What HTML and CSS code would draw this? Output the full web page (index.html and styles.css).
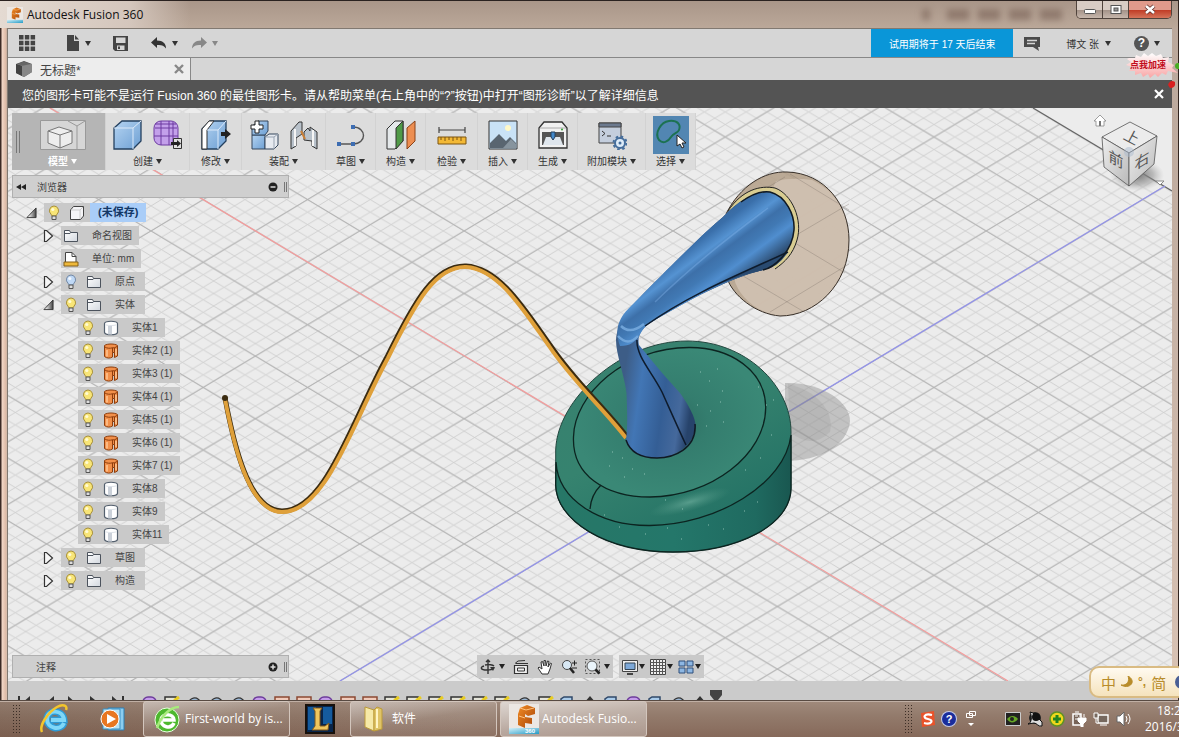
FILE: index.html
```html
<!DOCTYPE html>
<html lang="zh-CN">
<head>
<meta charset="utf-8">
<title>Autodesk Fusion 360</title>
<link rel="stylesheet" href="styles.css">
</head>
<body>
<svg class="defs" aria-hidden="true">
  <defs>
    <linearGradient id="gBlue" x1="0" y1="0" x2="1" y2="1"><stop offset="0" stop-color="#b5d4f2"/><stop offset="1" stop-color="#6d9fd3"/></linearGradient>
    <linearGradient id="gWhite" x1="0" y1="0" x2="1" y2="1"><stop offset="0" stop-color="#fff"/><stop offset="1" stop-color="#d3d8df"/></linearGradient>
    <linearGradient id="gDark" x1="0" y1="0" x2="1" y2="0"><stop offset="0.2" stop-color="#eee"/><stop offset="1" stop-color="#444"/></linearGradient>
    <linearGradient id="gFusion" x1="0" y1="0" x2="1" y2="1"><stop offset="0" stop-color="#f08a24"/><stop offset="1" stop-color="#a94608"/></linearGradient>
    <linearGradient id="gCyan" x1="0" y1="0" x2="1" y2="1"><stop offset="0" stop-color="#d5f0f8"/><stop offset="1" stop-color="#239bc6"/></linearGradient>
  </defs>
  <symbol id="bulb" viewBox="0 0 12 16"><path d="M6 1a4.700 4.700 0 0 0-3 8.200L4 11h4l1-1.800A4.700 4.700 0 0 0 6 1z" fill="#f8e577" stroke="#a8903a"/><circle cx="4.800" cy="4.500" r="1.600" fill="#fffbd5"/><path d="M4 11h4v3.500H4z" fill="#ddd" stroke="#555"/></symbol>
  <symbol id="bulboff" viewBox="0 0 12 16"><path d="M6 1a4.700 4.700 0 0 0-3 8.200L4 11h4l1-1.800A4.700 4.700 0 0 0 6 1z" fill="#bfd8f5" stroke="#7288a5"/><circle cx="4.800" cy="4.500" r="1.600" fill="#f2f8ff"/><path d="M4 11h4v3.500H4z" fill="#ddd" stroke="#555"/></symbol>
  <symbol id="folder" viewBox="0 0 16 16"><path d="M1.500 13.500v-11h5l1 2h7v9z" fill="url(#gWhite)" stroke="#4c535d"/><path d="M2 5.500h5l1-1" stroke="#4c535d" fill="none"/></symbol>
  <symbol id="body" viewBox="0 0 16 16"><path d="M1.500 3.500C2 .500 14 .500 14.500 3.500v9c-1 3-12 3-13 0z" fill="#fff" stroke="#54606e" stroke-width="1.200"/><path d="M5 6v8.500h4V6z" fill="#cbd1d9"/><path d="M2.500 4.800c3 1 8 1 11 0" stroke="#dde2e8" fill="none"/></symbol>
  <symbol id="surf" viewBox="0 0 16 16"><path d="M1.500 2.500C4 .500 12 .500 14.500 2.500V13l-3 1.500V9.500H9.500V14C7 15.500 4 15.500 1.500 13.500z" fill="#f2904a" stroke="#8d3d0c"/><path d="M2 4c2 1.500 5 1.500 7.500.8V9.500M9.500 4.800h2V9.500M11.500 4.800L14 3.500" stroke="#8d3d0c" fill="none"/><path d="M4 7v6.500M13 6v6" stroke="#ffc694" stroke-width="1.500"/></symbol>
  <symbol id="closed" viewBox="0 0 11 14"><path d="M1.500 1.500h2l6 5.500-6 5.500h-2z" fill="#f6f6f6" stroke="#333" stroke-width="1.200"/></symbol>
  <symbol id="open" viewBox="0 0 12 14"><path d="M11 1.500V12H1z" fill="url(#gDark)" stroke="#333"/></symbol>
  <symbol id="cube" viewBox="0 0 16 16"><path d="M1.500 5l3-3.500h10v9.500l-3 3.500h-10z" fill="#f5f5f7" stroke="#444"/><path d="M2 5h9l3-3M11 5v9" stroke="#ccc" fill="none"/></symbol>
  <symbol id="sketch" viewBox="0 0 16 16"><path d="M1 1h11v14H1z" fill="#e5e5da" stroke="#333" stroke-width="1.500"/><path d="M15 1l-4 3-2 6" stroke="#e8cc22" stroke-width="3" fill="none"/></symbol>
  <symbol id="purple" viewBox="0 0 16 16"><rect x="1" y="1" width="13" height="13" rx="5" fill="#c49cea" stroke="#6d3c9b" stroke-width="1.500"/></symbol>
  <symbol id="orangebox" viewBox="0 0 16 16"><path d="M1 1h14v14H1z" fill="#f1cbbb" stroke="#8c4933" stroke-width="1.500"/></symbol>
  <symbol id="bluebox" viewBox="0 0 16 16"><path d="M1 15V3l3-2h8v13z" fill="#a9cbea" stroke="#30496a" stroke-width="1.500"/></symbol>
  <symbol id="arc" viewBox="0 0 16 16"><path d="M1 14C0 0 14-2 15 9l-5 3V5L5 9v6z" fill="#9bb8d6" stroke="#333" stroke-width="1.200"/></symbol>
  <symbol id="peak" viewBox="0 0 16 16"><path d="M8 0l6 7h-3v8H5V7H2z" fill="#333"/></symbol>
  <symbol id="fusion" viewBox="0 0 30 30"><path d="M0 0h30v30H0z" fill="#ece7e3"/><path d="M11 4L18 1l8 3v6l-7 2-3-2v3l7 1v6l-7-1v5l-7-3V10z" fill="url(#gFusion)"/><path d="M11 4l6 2 8-2M10 12l6 2" stroke="#ffc27e" fill="none"/><path d="M0 24h30v6H0z" fill="url(#gCyan)"/></symbol>
</svg>

<div class="desktop">
  <main class="window">
    <header class="titlebar">
      <svg class="app-icon"><use href="#fusion"/></svg>
      <h1 class="title">Autodesk Fusion 360</h1>
      <div class="ghost"><i></i><i></i><i></i><i></i><i></i></div>
      <div class="winctl">
        <button class="wc" aria-label="最小化"><svg width="14" height="10"><rect x="1.500" y="4.500" width="11" height="4" rx="1" fill="#fff" stroke="#555"/></svg></button>
        <button class="wc" aria-label="最大化"><svg width="14" height="12"><rect x="2" y="1.500" width="10" height="8" fill="#fff" stroke="#555"/><rect x="5" y="4" width="4" height="3" fill="#999" stroke="#555"/></svg></button>
        <button class="wc wc-close" aria-label="关闭"><svg width="14" height="12"><path d="M3 2l8 7M11 2L3 9" stroke="#5b2b25" stroke-width="4"/><path d="M3 2l8 7M11 2L3 9" stroke="#fff" stroke-width="2.500"/></svg></button>
      </div>
    </header>

    <div class="frame">
      <div class="appbar">
        <button class="ab ab-grid" aria-label="数据面板"><svg width="18" height="18" fill="#444"><path d="M1 1h4.500v4.500H1zM6.800 1h4.500v4.500H6.800zM12.600 1h4.500v4.500h-4.500zM1 6.800h4.500v4.500H1zM6.800 6.800h4.500v4.500H6.800zM12.600 6.800h4.500v4.500h-4.500zM1 12.600h4.500v4.500H1zM6.800 12.600h4.500v4.500H6.800zM12.600 12.600h4.500v4.500h-4.500z"/></svg></button>
        <button class="ab ab-file" aria-label="文件"><svg width="14" height="18"><path d="M1 1h7v6h5v10H1z" fill="#444"/><path d="M9 1l4 4.500H9z" fill="#444"/></svg><b class="car"></b></button>
        <button class="ab ab-save" aria-label="保存"><svg width="16" height="17"><path d="M0 1h15v15H2l-2-2z" fill="#444"/><path d="M3 2.500h9.500v5.500H3zM4 10.500h7.500V15H4z" fill="#d6d6d6"/><path d="M5 11.500h2V14H5z" fill="#444"/></svg></button>
        <button class="ab ab-undo" aria-label="撤销"><svg width="16" height="14"><path d="M6 1v3.500c6 0 9 3 9 8-2-3-5-4-9-3.500V12L0 6.500z" fill="#333"/></svg><b class="car"></b></button>
        <button class="ab dim" aria-label="重做"><svg width="16" height="14"><path d="M10 1v3.500c-6 0-9 3-9 8 2-3 5-4 9-3.500V12l6-5.500z" fill="#888"/></svg><b class="car"></b></button>
        <a class="trial" href="#">试用期将于 17 天后结束</a>
        <button class="ab chat" aria-label="消息"><svg width="16" height="15"><path d="M0 1h16v10h-2l1 4-6-4H0z" fill="#4b4b4b"/><path d="M3 4.500h10M3 7.500h8" stroke="#d6d6d6" stroke-width="1.300"/></svg></button>
        <button class="ab user">博文 张<b class="car"></b></button>
        <button class="ab help" aria-label="帮助"><span class="q">?</span><b class="car"></b></button>
      </div>

      <div class="tabs">
        <div class="tab">
          <svg width="16" height="16"><path d="M0 3l8-3 8 3v8l-8 5-8-4z" fill="#555"/><path d="M0 3l6 2v10l2 1 8-5V3z" fill="#888"/><path d="M0 3l6 2v10l-6-3z" fill="#444"/><path d="M1 3l7-2.500L15 3 6.500 4.800z" fill="#666"/></svg>
          <span class="tab-name">无标题*</span>
          <button class="tab-x" aria-label="关闭标签"><svg width="10" height="10"><path d="M1 1l8 8M9 1L1 9" stroke="#888" stroke-width="2.400"/></svg></button>
        </div>
      </div>

      <div class="notice">
        <span>您的图形卡可能不是运行 Fusion 360 的最佳图形卡。请从帮助菜单(右上角中的“?”按钮)中打开“图形诊断”以了解详细信息</span>
        <button aria-label="关闭提示"><svg width="10" height="10"><path d="M1 1l8 8M9 1L1 9" stroke="#fff" stroke-width="2.200"/></svg></button>
      </div>

      <section class="viewport">
        <svg class="scene" viewBox="8 108 1164 573" preserveAspectRatio="xMidYMid slice" aria-hidden="true">
          <defs>
            <pattern id="minor" patternUnits="userSpaceOnUse" x="673" y="481.300" width="20.880" height="12.520"><path d="M0 0L20.880 12.520M0 12.520L20.880 0" stroke="#cdcdcd" stroke-width=".9"/></pattern>
            <pattern id="major" patternUnits="userSpaceOnUse" x="673" y="481.300" width="104.400" height="62.600"><path d="M0 0L104.400 62.600M0 62.600L104.400 0" stroke="#b0b0b0" stroke-width="1"/></pattern>
            <linearGradient id="teal" x1="0" y1="0" x2=".6" y2="1"><stop offset="0" stop-color="#38806f"/><stop offset=".5" stop-color="#36836f"/><stop offset="1" stop-color="#227064"/></linearGradient>
            <linearGradient id="side" x1="0" y1="0" x2="1" y2="0"><stop offset="0" stop-color="#277767"/><stop offset=".5" stop-color="#24776a"/><stop offset=".85" stop-color="#1f6a60"/><stop offset="1" stop-color="#195750"/></linearGradient>
            <radialGradient id="topf"><stop offset="0" stop-color="#2c6c60"/><stop offset=".4" stop-color="#347d6e"/><stop offset="1" stop-color="#3a8876"/></radialGradient>
            <radialGradient id="glow"><stop offset="0" stop-color="#7dbba9" stop-opacity=".55"/><stop offset="1" stop-color="#5b9f8c" stop-opacity="0"/></radialGradient>
            <linearGradient id="horn" gradientUnits="userSpaceOnUse" x1="690" y1="225" x2="738" y2="290"><stop offset="0" stop-color="#355f91"/><stop offset=".22" stop-color="#3a6faa"/><stop offset=".38" stop-color="#5593d2"/><stop offset=".5" stop-color="#3d70a9"/><stop offset=".62" stop-color="#4179b4"/><stop offset=".74" stop-color="#508ecf"/><stop offset="1" stop-color="#26405f"/></linearGradient>
            <linearGradient id="neck" gradientUnits="userSpaceOnUse" x1="622" y1="390" x2="692" y2="400"><stop offset="0" stop-color="#3d5d87"/><stop offset=".25" stop-color="#4276b5"/><stop offset=".6" stop-color="#345e95"/><stop offset=".85" stop-color="#45699c"/><stop offset="1" stop-color="#27436b"/></linearGradient>
            <linearGradient id="cubeL" x1="0" y1="0" x2="1" y2="1"><stop offset="0" stop-color="#efefef"/><stop offset="1" stop-color="#b9b9b9"/></linearGradient>
            <radialGradient id="soft"><stop offset="0" stop-color="#777"/><stop offset=".6" stop-color="#888" stop-opacity=".5"/><stop offset="1" stop-color="#aaa" stop-opacity="0"/></radialGradient>
          </defs>
          <path d="M8 108H1172V681H8z" fill="#ececec"/>
          <path d="M8 108H1033L1172 191V681H8z" fill="url(#minor)"/>
          <path d="M8 108H1033L1172 191V681H8z" fill="url(#major)"/>
          <path d="M1033 108L1172 191" stroke="#666" stroke-width="1.300"/>
          <path d="M50 108L1008 681" stroke="#f59c9c" stroke-width="1.200"/>
          <path d="M1165 186L340 681" stroke="#9292ea" stroke-width="1.200"/>
          <path d="M785 383C822 382 850 402 850 421C848 445 820 461 785 461z" fill="#888" opacity=".42"/>
          <path d="M788 384C815 390 835 410 830 432Q812 450 790 432z" fill="#777" opacity=".13"/>
          <path d="M726 214C740 186 764 171 787 172C825 173 849 205 849 240C849 285 815 316 780 316C756 314 733 296 727 278z" fill="#b39f87" fill-opacity=".85"/>
          <path d="M776 181Q792 177 812 180C836 191 849 214 849 240C849 285 815 316 780 316C758 313 738 297 734 278z" fill="#d0c1b1" fill-opacity=".9"/>
          <path d="M742 267L849 204M770 312L849 264M790 174L849 210M765 225L845 273M738 273L806 313M765 189L785 177" stroke="#7d746b" stroke-opacity=".35"/>
          <path d="M726 214C740 186 764 171 787 172C825 173 849 205 849 240C849 285 815 316 780 316C756 314 733 296 727 278" fill="none" stroke="#383029"/>
          <path d="M728 211C742 190 760 185 775 188C792 194 803 220 797 240C793 254 785 262 775 269" fill="#d8cc91" stroke="#222"/>
          <path d="M555.700 485V450C557 400 620 341 687 341C745 341 791 385 791 432V488C791 525 738 552 673 552C605 552 556 520 555.700 485z" fill="url(#teal)" stroke="#23473f"/>
          <path d="M556 462C558 500 600 526 650 525.500C715 525 785 485 791 435V488C791 525 738 552 673 552C605 552 556 520 555.700 485z" fill="url(#side)" stroke="#0c2420" stroke-width="1.300"/>
          <path d="M573.500 437C572 475 605 497 650 497C710 497 766 455 765.700 407C765 370 730 347.500 690 347.500C625 347 574 395 573.500 437z" fill="url(#topf)" stroke="#0c2420" stroke-width="1.300"/>
          <ellipse cx="690" cy="502" rx="42" ry="9" transform="rotate(-16 690 502)" fill="url(#glow)"/>
          <path d="M601 485Q591 495 590 509" stroke="#0c2420" stroke-width="1.300" fill="none"/>
          <path d="M700 372h1m8 9h1m7-12h1m4 22h1m-26 14h1m12 6h1m9-9h1m-15 24h1m16-4h1M612 452h1m9 6h1m-14 8h1m22 3h1m-9 8h1m19-3h1M604 515h1m14 12h1m25 7h1m21-6h1m13 11h1m26-14h1m14 4h1m20-18h1m12-9h1M665 500h1m16 9h1M745 470h1m14-12h1m10-23h1m-6-30h1m-9-18h1m14 13h1" stroke="#b4dccf" opacity=".7"/>
          <path d="M225 398C233 440 248 511 282 511C325 511 350 425 387 357C415 300 435 265 466 266C500 268 525 310 550 345C575 382 605 408 627 437" fill="none" stroke="#3b2b10" stroke-width="5"/>
          <path d="M225 399C233 441 248 512 282 512C326 512 351 426 388 358C416 301 436 266 466 267C499 269 524 311 549 346C574 383 604 409 626 438" fill="none" stroke="#dfa03a" stroke-width="4"/>
          <circle cx="225" cy="398" r="3" fill="#3b2b10"/>
          <path d="M626 440C628 425 627 408 626.500 393C624 373 616 355 616 340C617 322 632 305 647 290C685 252 705 232 723 217C740 198 758 191 770 192C786 196 795 215 794 230C792 253 773 268 763 270C730 278 690 299 650 323C641 329 637 337 639 345C657 367 668 380 680 393C690 407 698 422 695 430C692 447 673 458 657 458C641 458 627 450 626 440z" fill="url(#neck)"/>
          <path d="M620 346C614 330 618 318 632 305L647 290C685 252 705 232 723 217C740 198 758 191 770 192C786 196 795 215 794 230C792 253 773 268 763 270C730 278 690 299 650 323C638 329 641 346 620 346z" fill="url(#horn)"/>
          <path d="M655 302Q700 258 768 208" stroke="#8abbf0" stroke-width="1.500" opacity=".35" fill="none"/>
          <path d="M621 326Q630 335 644 324M618 336Q628 347 638 336" stroke="#78acdf" stroke-width="2.500" opacity=".85" fill="none"/>
          <path d="M788 252Q778 268 763 270C735 276 710 288 687 300Q740 274 788 252z" fill="#294a70"/>
          <path d="M645 326C690 294 740 274 788 252M637 340C636 356 652 372 662 392C671 412 679 430 686 445" fill="none" stroke="#0e1b2c" stroke-width="1.500"/>
          <path d="M741 202Q758 190 770 192C786 196 795 215 794 230C792 253 773 268 763 270M626 440Q632 458 657 458C673 458 697 449 695 424" fill="none" stroke="#101923" stroke-width="1.500"/>
          <ellipse cx="1137" cy="175" rx="27" ry="16" fill="url(#soft)"/>
          <path d="M1130 122L1157 136L1129 153L1102 137z" fill="#ececec" stroke="#555" stroke-width=".8"/>
          <path d="M1102 137L1129 153V186L1104 167z" fill="url(#cubeL)" stroke="#555" stroke-width=".8"/>
          <path d="M1157 136L1129 153V186L1154 164z" fill="url(#cubeL)" stroke="#555" stroke-width=".8"/>
          <circle cx="1129" cy="152" r="5" fill="#a9b9cd" opacity=".5"/>
          <text class="face" transform="translate(1129 142) rotate(28)" text-anchor="middle">上</text>
          <text class="face" transform="translate(1116 165) skewY(29)" text-anchor="middle">前</text>
          <text class="face" transform="translate(1142 166) skewY(-31)" text-anchor="middle">右</text>
          <path d="M1094 121l6-6 6 6h-2v5h-8v-5z" fill="#fff" stroke="#888" stroke-width=".8"/><path d="M1099 121h2v5h-2z" fill="#777"/>
          <path d="M1156 181h8l-4 4z" fill="#fff" stroke="#888"/>
        </svg>

        <nav class="ribbon">
          <button class="rb model"><span class="ics"><svg width="46" height="30"><path d="M.500 .5h45v29H.500z" fill="#d6d6d6" stroke="#999"/><path d="M28 1l9 5 8-5M37 6v23" stroke="#999" fill="none"/><path d="M8 11l11-4 13 4v12l-12 5-12-5z" fill="#eee" stroke="#777"/><path d="M8 11l12 4 12-4M20 15v13" stroke="#777" fill="none"/></svg></span><span class="lb">模型<b class="car"></b></span></button>
          <button class="rb w84"><span class="ics"><svg width="30" height="30"><path d="M1 8l8-7h19v20l-8 8H1z" fill="url(#gBlue)" stroke="#24405f" stroke-width="1.300"/><path d="M1 8h19v21M20 8l8-7" stroke="#dceafa" fill="none"/></svg><svg width="30" height="30"><rect x="1" y="1" width="24" height="24" rx="7" fill="#c3a0ea" stroke="#6c3ba0"/><path d="M2 8h22M1 16h24M8 1v24M16 1v24M20 2v22M2 4h21" stroke="#6c3ba0" fill="none"/><path d="M20.500 18.500h8v10h-8z" fill="#e0e0e0" stroke="#333"/><path d="M18 22h6v-2l4 3.500-4 3.500v-2h-6z" fill="#222"/></svg></span><span class="lb">创建<b class="car"></b></span></button>
          <button class="rb w52"><span class="ics"><svg width="30" height="30"><path d="M1 9l8-8h16v20l-8 8H1z" fill="url(#gBlue)" stroke="#24405f" stroke-width="1.300"/><path d="M1 9l7-8h5L6 10v19H1z" fill="#fff" stroke="#333"/><path d="M6 10h11v19M17 10l8-9" stroke="#dceafa" fill="none"/><path d="M20 12h4V9l6 5-6 5v-3h-4z" fill="#222"/></svg></span><span class="lb">修改<b class="car"></b></span></button>
          <button class="rb w84"><span class="ics"><svg width="30" height="30"><path d="M2 15h13v14H2z" fill="url(#gBlue)" stroke="#35475c"/><path d="M5 4l3-3h10v10l-3 4H2V6z" fill="url(#gBlue)" stroke="#35475c"/><path d="M15 17l4-3h9v11l-4 4h-9z" fill="#e6eaf0" stroke="#35475c"/><path d="M15 17h9v12M24 17l4-3" stroke="#9aa5b3" fill="none"/><path d="M5 1h4v4h4v4H9v4H5V9H1V5h4z" fill="#fff" stroke="#222"/></svg><svg width="28" height="30"><path d="M1 11l8-9h3v12l-6 4v8l-5 3z" fill="#b9c2cb" stroke="#333"/><path d="M14 12l4-4 2 3V7l7 5v17l-5-3v-5l-8-1z" fill="#b9c2cb" stroke="#333"/><path d="M5 9v17M23 10v16" stroke="#f5f5f5" stroke-width="2"/><path d="M11 11l4 8" stroke="#cb8038" stroke-width="2"/></svg></span><span class="lb">装配<b class="car"></b></span></button>
          <button class="rb w50"><span class="ics"><svg width="30" height="30"><path d="M3 24h14M17 7c14 0 14 17 0 17" stroke="#555" fill="none" stroke-width="1.400"/><path d="M1 22h4v4H1zM15 22h4v4h-4zM15 5h4v4h-4z" fill="#3d6db2"/></svg></span><span class="lb">草图<b class="car"></b></span></button>
          <button class="rb w50"><span class="ics"><svg width="30" height="30"><path d="M1 9l8-8h8v20l-8 8H1z" fill="#e5e9eb" stroke="#333"/><path d="M10 8l7-7v20l-7 8z" fill="#4f9a48" stroke="#333"/><path d="M21 8l8-7v20l-8 8z" fill="#ed8e51" stroke="#8a4319"/></svg></span><span class="lb">构造<b class="car"></b></span></button>
          <button class="rb w52"><span class="ics"><svg width="30" height="30"><path d="M2 10h26M2 7v6M28 7v6" stroke="#444" stroke-width="1.200"/><path d="M1 17h28v7H1z" fill="#f3b936" stroke="#7d5510"/><path d="M4 17v3M8 17v4M12 17v3M16 17v4M20 17v3M24 17v4" stroke="#7d5510"/></svg></span><span class="lb">检验<b class="car"></b></span></button>
          <button class="rb w50"><span class="ics"><svg width="30" height="30"><path d="M1 1h28v28H1z" fill="#c9e2f6" stroke="#333"/><circle cx="20" cy="8" r="3" fill="#fff9c8"/><path d="M2 23l9-9 7 7 4-4 6 6v5H2z" fill="#596570"/><path d="M15 28l8-9 5 5v4z" fill="#87949e"/></svg></span><span class="lb">插入<b class="car"></b></span></button>
          <button class="rb w50"><span class="ics"><svg width="30" height="30"><path d="M1 8l5-6h18l5 6v20H1z" fill="#f1f1f1" stroke="#333" stroke-width="1.300"/><path d="M2 8h26" stroke="#aaa"/><path d="M4 12h22v13H4z" fill="#555"/><path d="M8 17h14l3 8H5z" fill="#dfe6ed"/><path d="M13 12h4v5l-2 3-2-3z" fill="#4188cb" stroke="#24405f"/><circle cx="24" cy="9.500" r="1" fill="#2ca02c"/></svg></span><span class="lb">生成<b class="car"></b></span></button>
          <button class="rb w68"><span class="ics"><svg width="30" height="30"><path d="M2 3h22v20H2z" fill="#c4cedd" stroke="#444"/><path d="M2 3h22v4H2z" fill="#6c7a8f" stroke="#444"/><path d="M5 11l3 2.500L5 16M10 16h4" stroke="#333" fill="none"/><circle cx="23" cy="23" r="5" fill="#ddebf8" stroke="#466e9c" stroke-width="2"/><circle cx="23" cy="23" r="6.500" fill="none" stroke="#466e9c" stroke-width="2" stroke-dasharray="2.500 2.600"/><circle cx="23" cy="23" r="1.500" fill="#466e9c"/></svg></span><span class="lb">附加模块<b class="car"></b></span></button>
          <button class="rb w50"><span class="ics"><svg class="sel" width="36" height="38"><path d="M6 24C1 17 8 6 16 5c9-1 12 4 10 9-1 3-6 3-8 7-3 5-8 7-12 3z" fill="none" stroke="#1c7252" stroke-width="2"/><path d="M24 19v11l3-2 2 4 2-1-2-4h4z" fill="#fff" stroke="#222"/></svg></span><span class="lb">选择<b class="car"></b></span></button>
        </nav>

        <div class="panel">
          <svg width="10" height="8"><path d="M5 1v6L0 4zM10 1v6L5 4z" fill="#222"/></svg>
          <h2>浏览器</h2>
          <button aria-label="折叠"><svg width="10" height="10"><circle cx="5" cy="5" r="4.500" fill="#222"/><path d="M2.500 5h5" stroke="#ddd" stroke-width="1.500"/></svg></button><i></i>
        </div>

        <ul class="tree">
          <li><button class="tw" aria-label="收起"><svg><use href="#open"/></svg></button><span class="node root"><svg class="b"><use href="#bulb"/></svg><svg class="f"><use href="#cube"/></svg><em>(未保存)</em></span></li>
          <li class="l1"><button class="tw" aria-label="展开"><svg><use href="#closed"/></svg></button><span class="node"><svg class="f"><use href="#folder"/></svg><em>命名视图</em></span></li>
          <li class="l1"><span class="tw"></span><span class="node"><svg class="f" viewBox="0 0 16 16"><path d="M2.500 11V1.500H9l4 4V11" fill="#fff" stroke="#444"/><path d="M9 1.500v4h4" fill="none" stroke="#444"/><path d="M1 11h14v4H1z" fill="#efb93b" stroke="#85611a"/></svg><em>单位: mm</em></span></li>
          <li class="l1"><button class="tw" aria-label="展开"><svg><use href="#closed"/></svg></button><span class="node"><svg class="b"><use href="#bulboff"/></svg><svg class="f"><use href="#folder"/></svg><em>原点</em></span></li>
          <li class="l1"><button class="tw" aria-label="收起"><svg><use href="#open"/></svg></button><span class="node"><svg class="b"><use href="#bulb"/></svg><svg class="f"><use href="#folder"/></svg><em>实体</em></span></li>
          <li class="l2"><span class="node"><svg class="b"><use href="#bulb"/></svg><svg class="f"><use href="#body"/></svg><em>实体1</em></span></li>
          <li class="l2"><span class="node"><svg class="b"><use href="#bulb"/></svg><svg class="f"><use href="#surf"/></svg><em>实体2 (1)</em></span></li>
          <li class="l2"><span class="node"><svg class="b"><use href="#bulb"/></svg><svg class="f"><use href="#surf"/></svg><em>实体3 (1)</em></span></li>
          <li class="l2"><span class="node"><svg class="b"><use href="#bulb"/></svg><svg class="f"><use href="#surf"/></svg><em>实体4 (1)</em></span></li>
          <li class="l2"><span class="node"><svg class="b"><use href="#bulb"/></svg><svg class="f"><use href="#surf"/></svg><em>实体5 (1)</em></span></li>
          <li class="l2"><span class="node"><svg class="b"><use href="#bulb"/></svg><svg class="f"><use href="#surf"/></svg><em>实体6 (1)</em></span></li>
          <li class="l2"><span class="node"><svg class="b"><use href="#bulb"/></svg><svg class="f"><use href="#surf"/></svg><em>实体7 (1)</em></span></li>
          <li class="l2"><span class="node"><svg class="b"><use href="#bulb"/></svg><svg class="f"><use href="#body"/></svg><em>实体8</em></span></li>
          <li class="l2"><span class="node"><svg class="b"><use href="#bulb"/></svg><svg class="f"><use href="#body"/></svg><em>实体9</em></span></li>
          <li class="l2"><span class="node"><svg class="b"><use href="#bulb"/></svg><svg class="f"><use href="#body"/></svg><em>实体11</em></span></li>
          <li class="l1"><button class="tw" aria-label="展开"><svg><use href="#closed"/></svg></button><span class="node"><svg class="b"><use href="#bulb"/></svg><svg class="f"><use href="#folder"/></svg><em>草图</em></span></li>
          <li class="l1"><button class="tw" aria-label="展开"><svg><use href="#closed"/></svg></button><span class="node"><svg class="b"><use href="#bulb"/></svg><svg class="f"><use href="#folder"/></svg><em>构造</em></span></li>
        </ul>

        <div class="bottom">
          <div class="panel">
            <h2 class="indent">注释</h2>
            <button aria-label="展开"><svg width="10" height="10"><circle cx="5" cy="5" r="4.500" fill="#222"/><path d="M2.500 5h5M5 2.500v5" stroke="#ddd" stroke-width="1.500"/></svg></button><i></i>
          </div>
          <div class="navs">
            <div class="nav">
              <button aria-label="动态观察"><svg width="16" height="16"><path d="M8 1v14M6 3l2-2 2 2" stroke="#333" fill="none" stroke-width="1.400"/><path d="M4 7c-4 1-4 4 3 4 4 0 6-1 7-2M5 6c4-1 8 0 9 1" stroke="#333" fill="none" stroke-width="1.300"/><path d="M10 8l5 0-2 4z" fill="#333"/></svg><b class="car"></b></button>
              <button aria-label="观察方向"><svg width="16" height="16"><path d="M1.500 6.500h13v8h-13z" fill="#eee" stroke="#333" stroke-width="1.200"/><path d="M4.500 9h7v3h-7zM2 4.500L5 2l7-.500M3 4.500h12" stroke="#333" fill="none"/></svg></button>
              <button aria-label="平移"><svg width="16" height="16"><path d="M5 15L1 9l1-1 3 2L4 3l1.500-.5L7 7V1.500h1.500L9 7l1.500-5 1.500.5L11 8l2.500-4 1 .5L13 10l-2 5z" fill="#fff" stroke="#333"/></svg></button>
              <button aria-label="缩放"><svg width="16" height="16"><circle cx="6" cy="6" r="4.500" fill="#d8e8f4" stroke="#444"/><path d="M9 9l4 5" stroke="#222" stroke-width="2.500"/><path d="M11 4h5M13.500 1.500v5M11 9h5" stroke="#222"/></svg></button>
              <button aria-label="窗口缩放"><svg width="16" height="16"><path d="M.500 .5h14v14H.500z" fill="none" stroke="#555" stroke-dasharray="2 2"/><circle cx="7" cy="7" r="5" fill="#eaf4fa" stroke="#555"/><path d="M10.500 10.500l4 4" stroke="#222" stroke-width="2.500"/></svg><b class="car"></b></button>
            </div>
            <div class="nav nav2">
              <button aria-label="显示设置"><svg width="16" height="16"><path d="M.500 1.500h15v11H.500z" fill="#eee" stroke="#444"/><path d="M3 4h10v6.500H3z" fill="#7da8d8" stroke="#345"/><path d="M5 15h6" stroke="#444" stroke-width="2"/></svg><b class="car"></b></button>
              <button aria-label="栅格"><svg width="16" height="16"><path d="M.500 .5h15v15H.500z" fill="#eee" stroke="#444"/><path d="M3.500 0v16M6.500 0v16M9.500 0v16M12.500 0v16M0 3.500h16M0 6.500h16M0 9.500h16M0 12.500h16" fill="none" stroke="#555"/></svg><b class="car"></b></button>
              <button aria-label="视口"><svg width="16" height="16"><path d="M1 2h6v5H1zM9 2h6v5H9zM1 9h6v5H1zM9 9h6v5H9z" fill="#8db7e3" stroke="#2f4f7a"/></svg><b class="car"></b></button>
            </div>
          </div>
        </div>
      </section>

      <footer class="timeline">
        <svg class="play" width="110" height="16" fill="#333"><path d="M0 0h2v16H0zM12 0v16L3 8zM36 0v16l-9-8zM50 0l9 8-9 8zM72 0l10 8-10 8zM94 0l9 8-9 8zM104 0h2v16h-2z"/></svg>
        <div class="steps">
          <svg><use href="#purple"/></svg><svg><use href="#sketch"/></svg><svg><use href="#arc"/></svg><svg><use href="#arc"/></svg><svg><use href="#arc"/></svg><svg><use href="#purple"/></svg><svg><use href="#orangebox"/></svg><svg><use href="#orangebox"/></svg><svg><use href="#purple"/></svg><svg><use href="#orangebox"/></svg><svg><use href="#orangebox"/></svg><svg><use href="#sketch"/></svg><svg><use href="#sketch"/></svg><svg><use href="#sketch"/></svg><svg><use href="#sketch"/></svg><svg><use href="#sketch"/></svg><svg><use href="#sketch"/></svg><svg><use href="#arc"/></svg><svg><use href="#sketch"/></svg><svg><use href="#bluebox"/></svg><svg><use href="#peak"/></svg><svg><use href="#bluebox"/></svg><svg><use href="#purple"/></svg><svg><use href="#bluebox"/></svg><svg><use href="#arc"/></svg><svg><use href="#peak"/></svg>
        </div>
        <svg class="marker" width="12" height="12"><path d="M0 0h12v5L8 10v2H4v-2L0 5z" fill="#444"/></svg>
      </footer>
    </div>
  </main>

  <div class="boost"><svg width="54" height="36"><defs><linearGradient id="pk" x1="0" y1="0" x2="0" y2="1"><stop offset="0" stop-color="#fff"/><stop offset="1" stop-color="#f9a5a5"/></linearGradient></defs><path d="M4 5l6 0 1-3 5 2 3-4 4 3 4-3 4 3 5-2 2 4 6-1-1 5 6 3-2 3 6 5-10-2-2 4-4-2-4 4-3-3-5 4-2-4-5 3-2-4-6 2 0-4-6 0 3-4-6-2 5-3-4-3z" fill="url(#pk)"/><circle cx="53" cy="13" r="3" fill="#47ad23"/><path d="M43 32q2-6 7-3 1 6-5 6z" fill="#d92020"/></svg><span>点我加速</span></div>

  <div class="ime"><span>中</span><svg width="12" height="12"><path d="M7 0c9 5 2 14-7 9 6 1 9-4 7-9z" fill="#b88c2a" stroke="#b88c2a"/></svg><span class="pt">°,</span><span>简</span><i></i></div>

  <footer class="taskbar">
    <i class="grip"></i>
    <button class="tk ie" aria-label="Internet Explorer"><svg width="30" height="32"><path d="M24 20c-3 8-17 6-17-4S23 6 24 17H11" fill="none" stroke="#2e9bd6" stroke-width="7"/><path d="M24 20c-3 8-17 6-17-4S23 6 24 17H11" fill="none" stroke="#7fd7f8" stroke-width="4"/><path d="M2 29c-3-6 5-19 15-25 5-3 11-2 9 3" fill="none" stroke="#f3c52c" stroke-width="2.500"/></svg></button>
    <button class="tk wmp" aria-label="媒体播放器"><svg width="26" height="24"><path d="M8 1h16v22H8z" fill="#8ccdf0" stroke="#2b7fb5"/><path d="M3 2h17v20H3z" fill="#b8e3f6" stroke="#3c91c3"/><circle cx="10" cy="12" r="9" fill="#e87722" stroke="#fff"/><path d="M7 7l9 5-9 5z" fill="#fff"/></svg></button>
    <button class="tk task"><svg width="26" height="28"><circle cx="13" cy="15" r="12" fill="#4db82e" stroke="#e8ffe0"/><path d="M20 18c-3 7-13 4-13-3S20 8 20 15H9" fill="none" stroke="#fff" stroke-width="3.500"/><path d="M3 23C7 11 16 2 25 2" stroke="#a8ea7d" stroke-width="2.500" fill="none"/></svg><span>First-world by is...</span></button>
    <button class="tk lol" aria-label="英雄联盟"><svg width="30" height="30"><path d="M1 1h28v28H1z" fill="#09254a" stroke="#17100a" stroke-width="2"/><path d="M3 3h8v23H3zM18 3h9v17h-9z" fill="#155b9d"/><path d="M8 4h9l-2 3v15h5l4-3-1 7H7l3-4V7z" fill="#f0c65e" stroke="#80561a"/></svg></button>
    <button class="tk task faded"><svg width="26" height="28"><path d="M4 2l9 3v21l-9-4z" fill="#f6e9a7" stroke="#bd9b38"/><path d="M13 5l3-3 5 2v20l-8 2z" fill="#dfc468" stroke="#bd9b38"/><path d="M16 4v19" stroke="#fff4c3" stroke-width="2"/></svg><span>软件</span></button>
    <button class="tk task active"><svg width="30" height="30" viewBox="0 0 30 30"><use href="#fusion"/></svg><span>Autodesk Fusio...</span><small>360</small></button>
    <div class="tray">
      <i class="grip"></i>
      <svg class="sg" width="16" height="16"><path d="M1 2L14 0l1 14-13 2z" fill="#e9532a"/><path d="M12 4C4 2 2 7 8 8s4 6-4 4" stroke="#fff" stroke-width="2.200" fill="none"/></svg>
      <span class="ball">?</span>
      <svg width="10" height="18"><path d="M3.500 1.500h6v4h-6zM.500 3.500h6v4h-6z" fill="#8f7668" stroke="#fff"/><path d="M2 13h6l-3 3z" fill="#fff"/></svg>
      <div class="icons">
        <svg width="16" height="16"><path d="M.500 1.500h15v13H.500z" fill="#222" stroke="#ccc"/><path d="M2 8c4-5 9-3 11 0-3 4-8 5-11 0z" fill="#65a625"/><circle cx="7" cy="8" r="2" fill="#222"/></svg>
        <svg width="16" height="16"><circle cx="8" cy="7" r="6" fill="#222"/><path d="M1 13c4-1 4-8 2-12l3 1 9 9 0 4c-4 1-5-3-8-3z" fill="#ddd" stroke="#111"/><circle cx="9" cy="6" r="4" fill="#111"/></svg>
        <svg width="16" height="16"><circle cx="8" cy="8" r="7" fill="#f0d81c" stroke="#5d9324" stroke-width="1.500"/><path d="M8 4v8M4 8h8" stroke="#228421" stroke-width="3"/></svg>
        <svg width="16" height="16"><path d="M2 3h8v11H2z" fill="#776357" stroke="#fff" stroke-width="1.500"/><path d="M4 1h4M4 5h3M4 8h3M9 6V3M13 6V3M7 7h8v3l-3 3v3h-2v-3L7 10z" fill="#fff" stroke="#fff"/></svg>
        <svg width="16" height="16"><path d="M5 4h10v8H5z" fill="#76685e" stroke="#fff" stroke-width="1.400"/><path d="M1 2h4v5H1zM3 7v5h2M7 14h7" stroke="#fff" fill="#76685e"/></svg>
        <svg width="16" height="16"><path d="M2 5h3l4-4v14l-4-4H2z" fill="#fff" stroke="#666"/><path d="M11 5q2 3 0 6M13 3q4 5 0 10" stroke="#fff" fill="none"/></svg>
      </div>
      <time class="clock"><span>18:2</span><span>2016/3</span></time>
    </div>
  </footer>
</div>
</body>
</html>
```

FILE: styles.css
```css
* { box-sizing: border-box; }

body {
  margin: 0;
  font-family: "Liberation Sans", "Noto Sans CJK SC", sans-serif;
  font-size: 10px;
  color: #444;
}

button {
  border: 0;
  padding: 0;
  background: none;
  font: inherit;
  color: inherit;
  display: flex;
  align-items: center;
}

svg { flex: none; display: block; }
.defs { position: absolute; width: 0; height: 0; }

.desktop {
  height: 100vh;
  display: flex;
  flex-direction: column;
  position: relative;
  overflow: hidden;
}

.window {
  flex: 1;
  min-height: 0;
  display: flex;
  flex-direction: column;
  background: linear-gradient(90deg, #3b2a25 1px, #f3d8c8 2px, #dcb9a5 6px, transparent 7px),
              linear-gradient(#b9a79b, #c2aea1 30%, #d9c3b5);
  border-top: 1px solid #2a2220;
  border-right: 1px solid #31241f;
}

.titlebar {
  height: 27px;
  display: flex;
  align-items: center;
  padding-left: 7px;
  background: linear-gradient(90deg, #e4dad2, #d4c6bc 130px, rgba(184,165,151,0) 190px), linear-gradient(#a99689, #bba899);
}
.app-icon { width: 16px; height: 16px; }
.title {
  margin: 0 0 0 4px;
  flex: 1;
  font: 12px/16px "Open Sans", sans-serif;
  color: #111;
}
.ghost { display: flex; gap: 9px; margin-right: 14px; filter: blur(3px); }
.ghost i { width: 22px; height: 11px; background: #7a6356; opacity: .6; }
.ghost i:first-child { width: 8px; margin-right: 8px; }

.winctl { display: flex; align-self: flex-start; margin-right: 6px; border: 1px solid #50433c; border-top: 0; border-radius: 0 0 5px 5px; overflow: hidden; }
.wc { width: 26px; height: 17px; justify-content: center; background: linear-gradient(#d8ccc4 50%, #a39187 52%, #c7b7ac); border-right: 1px solid #50433c; }
.wc-close { width: 42px; border-right: 0; background: linear-gradient(#e09a8b 50%, #c03a24 52%, #d5745a); }

.frame {
  flex: 1;
  min-height: 0;
  margin: 0 6px 0 7px;
  border: 1px solid #817971;
  border-bottom: 0;
  border-right: 0;
  display: flex;
  flex-direction: column;
}

.car {
  display: inline-block;
  border: 3px solid transparent;
  border-top: 5px solid currentColor;
  border-bottom: 0;
  margin-left: 4px;
}

.appbar {
  height: 29px;
  display: flex;
  align-items: center;
  background: #d6d6d6;
  border-bottom: 1px solid #888;
  padding: 0 12px 0 10px;
  color: #333;
}
.ab { height: 100%; }
.ab .car { margin-left: 6px; }
.ab-file { margin-left: 30px; }
.ab-file .car { margin-left: 5px; }
.ab-save { margin-left: 22px; }
.ab-undo { margin: 0 14px 0 22px; }
.ab-undo .car, .dim .car { margin-left: 5px; }
.ab-undo + .dim { margin-left: -1px; }
.dim { color: #888; }
.trial {
  margin-left: auto;
  align-self: stretch;
  display: flex;
  align-items: center;
  justify-content: center;
  width: 142px;
  background: #0a96d8;
  color: #fff;
  text-decoration: none;
  font-size: 10px;
}
.chat { margin-left: 11px; }
.user { margin-left: 26px; }
.help { margin-left: 23px; }
.q { width: 15px; height: 15px; border-radius: 8px; background: #555; color: #fff; font: bold 12px/15px "Liberation Sans", sans-serif; }
.help .car { margin-left: 5px; }

.tabs { height: 22px; background: #d6d6d6; display: flex; }
.tab {
  width: 183px;
  display: flex;
  align-items: center;
  padding: 0 6px 0 8px;
  background: #ededed;
  border-right: 1px solid #888;
}
.tab-name { flex: 1; margin-left: 8px; font-size: 12px; }

.notice {
  height: 28px;
  display: flex;
  align-items: center;
  justify-content: space-between;
  padding: 0 8px 0 14px;
  background: #545454;
  color: #fff;
  font-size: 12px;
  white-space: nowrap;
}

.viewport {
  flex: 1;
  min-height: 0;
  position: relative;
  display: flex;
  flex-direction: column;
  align-items: flex-start;
  padding: 5px 4px 3px;
}
.scene { position: absolute; left: 0; top: 0; width: 100%; height: 100%; }
.face { font-size: 15px; fill: #555; }
.ribbon, .panel, .tree, .bottom { position: relative; }

.ribbon { display: flex; height: 57px; background: #dcdcdc; }
.rb {
  flex-direction: column;
  justify-content: flex-end;
  border-right: 1px solid #d2d2d2;
  color: #333;
}
.model { width: 94px; padding-left: 8px; background: linear-gradient(#777, #777) 4px 18px / 1px 22px no-repeat, linear-gradient(#777, #777) 7px 18px / 1px 22px no-repeat, #b5b5b5; color: #fff; font-weight: bold; }
.w84 { width: 84px; }
.w52 { width: 52px; }
.w50 { width: 50px; }
.w68 { width: 68px; }
.ics { display: flex; gap: 10px; align-items: center; height: 38px; }
.sel { background: #5286b2; }
.lb { line-height: 16px; white-space: nowrap; }
.lb .car { margin: 0 0 1px 3px; }

.panel {
  width: 277px;
  height: 23px;
  margin-top: 5px;
  display: flex;
  align-items: center;
  padding: 0 1px 0 3px;
  background: #cfcfcf;
  border: 1px solid #b0b0b0;
}
.panel h2 { flex: 1; margin: 0 0 0 11px; font-size: 10px; font-weight: normal; }
.panel .indent { margin-left: 20px; }
.panel i { width: 3px; height: 10px; margin-left: 6px; border: solid #777; border-width: 0 1px; }

.tree { list-style: none; margin: 5px 0 0; padding: 0 0 0 14px; display: grid; gap: 4px; }
.tree li { display: flex; height: 19px; }
.tree .l1 { padding-left: 17px; }
.tree .l2 { padding-left: 52px; }
.tw { width: 18px; height: 19px; }
.tw svg { width: 11px; height: 14px; }
.node { display: flex; align-items: center; background: #c9c9c9; padding-left: 2px; }
.node svg.b { width: 16px; height: 16px; }
.node svg.f { width: 16px; height: 16px; }
.node svg.b + svg.f { margin-left: 7px; }
.node em { font-style: normal; line-height: 19px; padding: 0 7px 0 13px; white-space: nowrap; }
.l1 .b ~ em { padding: 0 10px 0 13px; }
.root em { background: #a9cdf8; color: #123766; font-weight: bold; font-size: 11px; padding: 0 8px 0 8px; margin-left: 5px; }

.bottom { margin-top: auto; width: 100%; display: grid; grid-template-columns: 1fr auto 1fr; align-items: center; }
.bottom .panel { margin: 0; }
.navs { display: flex; gap: 6px; }
.nav { display: flex; gap: 8px; height: 23px; padding: 0 3px; background: #c9c9c9; }
.nav2 { gap: 5px; }
.nav .car { margin-left: 3px; color: #222; }
.nav2 .car { margin-left: 1px; }

.timeline { height: 19px; background: #cbcbcb; display: flex; padding: 15px 0 0 10px; overflow: hidden; position: relative; }
.play { width: 110px; }
.steps { display: flex; gap: 6px; margin-left: 14px; }
.steps svg { width: 16px; height: 16px; }
.marker { position: absolute; left: 702px; top: 9px; }

.boost { position: absolute; right: 0; top: 53px; width: 54px; height: 36px; }
.boost span { position: absolute; left: 5px; top: 5px; color: #c20d1d; font-weight: bold; font-size: 9px; line-height: 15px; white-space: nowrap; }

.ime {
  position: absolute;
  right: -8px;
  bottom: 39px;
  width: 98px;
  height: 32px;
  padding-left: 10px;
  display: flex;
  align-items: center;
  gap: 5px;
  border: 2px solid #d9bb83;
  border-radius: 10px;
  background: linear-gradient(#fffaf0, #f5e3bd);
  color: #b88c2a;
  font-size: 15px;
  z-index: 2;
}
.ime .pt { font-size: 12px; font-weight: bold; }
.ime i { flex: none; width: 14px; height: 14px; border-radius: 7px; background: #4a5f95; margin-left: 4px; }

.taskbar {
  height: 37px;
  display: flex;
  align-items: center;
  padding-left: 12px;
  background: linear-gradient(90deg, rgba(60,35,20,.15), transparent 40%), linear-gradient(#a08a7c, #937b6c 40%, #86695a);
  border-top: 1px solid #584a42;
  box-shadow: inset 0 1px #c0afa4;
  color: #fff;
  font: 12px/16px "Open Sans", "Noto Sans CJK SC", sans-serif;
}
.grip { width: 8px; height: 30px; background: radial-gradient(#3c2e26 1px, transparent 1px) 0 0 / 3px 3px; }
.ie { margin-left: 20px; }
.wmp { margin-left: 30px; }
.task {
  width: 147px;
  height: 36px;
  padding-left: 10px;
  border: 1px solid #d3c6bd;
  border-radius: 3px;
  background: linear-gradient(170deg, rgba(255,255,255,.45), rgba(255,255,255,.12) 50%, rgba(255,255,255,.05));
  position: relative;
}
.task span { margin-left: 5px; white-space: nowrap; }
.wmp + .task { margin-left: 17px; }
.lol { margin: 0 15px; }
.faded + .task { margin-left: 3px; padding-left: 8px; }
.active { background: linear-gradient(170deg, rgba(255,255,255,.65), rgba(255,255,255,.4) 50%, rgba(255,255,255,.3)); }
.active span { margin-left: 3px; }
.active small { position: absolute; left: 24px; bottom: 1px; font: bold 6px/8px "Liberation Sans", sans-serif; color: #fff; }

.tray { margin-left: auto; display: flex; align-items: center; height: 100%; }
.sg { margin-left: 8px; }
.ball { width: 14px; height: 14px; margin: 0 10px 0 6px; border-radius: 7px; background: #1a2d9c; box-shadow: 0 0 0 1px #c5cbe8; font: bold 11px/14px "Liberation Sans", sans-serif; text-align: center; }
.icons { display: flex; gap: 6px; margin-left: 29px; }
.clock { width: 48px; padding-left: 14px; display: grid; white-space: nowrap; }
.clock span:first-child { padding-left: 12px; }
```
